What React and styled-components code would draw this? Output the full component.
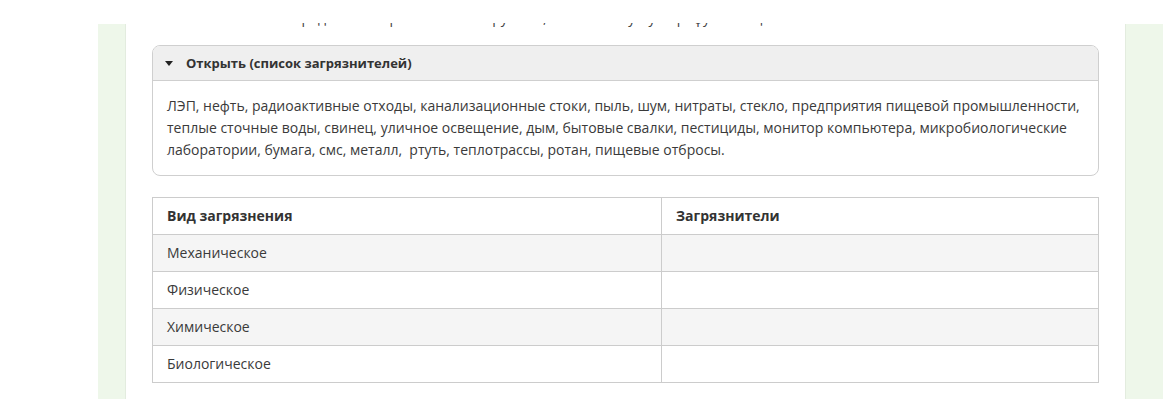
import React from "react";
import styled, { createGlobalStyle } from "styled-components";

const GlobalStyle = createGlobalStyle`
  html, body {
    margin: 0;
    padding: 0;
    background: #ffffff;
  }
  body {
    font-family: "Open Sans", "Noto Sans", sans-serif;
    color: #333333;
  }
`;

const Page = styled.div`
  display: flex;
  padding-left: 98px;
  min-height: 399px;
  box-sizing: border-box;
`;

const Rail = styled.div`
  width: ${(p) => p.$width}px;
  flex: none;
  margin-top: 24px;
  background: #eef7ea;
  box-sizing: border-box;
  ${(p) => (p.$side === "left" ? "border-right" : "border-left")}: 1px solid #e3ecdf;
`;

const Main = styled.main`
  flex: 1;
  min-width: 0;
  padding: 0 26px;
  box-sizing: border-box;
`;

/* the tail of the paragraph scrolled above the viewport */
const ScrolledLine = styled.div`
  height: 6px;
  margin-top: 23px;
  overflow: hidden;
`;

const ScrolledText = styled.p`
  margin: -16px 0 0 118px;
  font-size: 14px;
  line-height: 22px;
  white-space: nowrap;
  color: #444;
`;

const Accordion = styled.section`
  margin-top: 16px;
  border: 1px solid #cfcfcf;
  border-radius: 8px;
  overflow: hidden;
`;

const AccordionHeader = styled.button`
  display: flex;
  align-items: center;
  gap: 13px;
  width: 100%;
  height: 35px;
  padding: 0 0 1px 12px;
  background: #efefef;
  border: none;
  border-bottom: 1px solid #cfcfcf;
  font-family: inherit;
  font-size: 13px;
  font-weight: 700;
  color: #333;
  text-align: left;
  cursor: pointer;
  box-sizing: border-box;
`;

const Caret = styled.span`
  width: 0;
  height: 0;
  border-left: 4px solid transparent;
  border-right: 4px solid transparent;
  border-top: 5px solid #222;
  margin-top: 1px;
`;

const AccordionBody = styled.div`
  padding: 14px 14px 14px 14px;
  font-size: 14px;
  line-height: 22px;
  color: #3a3a3a;
`;

const Table = styled.table`
  margin-top: 21px;
  width: 100%;
  border-collapse: collapse;
  font-size: 14px;
  line-height: 22px;
  color: #3a3a3a;
`;

const Row = styled.tr`
  background: ${(p) => (p.$striped ? "#f5f5f5" : "#ffffff")};
`;

const HeadCell = styled.th`
  border: 1px solid #cccccc;
  padding: 7px 14px;
  text-align: left;
  font-weight: 700;
  color: #333;
  width: ${(p) => p.$width || "auto"};
`;

const Cell = styled.td`
  border: 1px solid #cccccc;
  padding: 7px 14px;
  height: 22px;
`;

const kinds = ["Механическое", "Физическое", "Химическое", "Биологическое"];

export default function App() {
  return (
    <>
      <GlobalStyle />
      <Page>
        <Rail $width={28} $side="left" />
        <Main>
          <ScrolledLine aria-hidden="true">
            <ScrolledText>
              Распределите загрязнители по группам, заполнив пустую графу таблицы.
            </ScrolledText>
          </ScrolledLine>
          <Accordion>
            <AccordionHeader type="button">
              <Caret />
              Открыть (список загрязнителей)
            </AccordionHeader>
            <AccordionBody>
              ЛЭП, нефть, радиоактивные отходы, канализационные стоки, пыль, шум, нитраты, стекло,
              предприятия пищевой промышленности, теплые сточные воды, свинец, уличное освещение,
              дым, бытовые свалки, пестициды, монитор компьютера, микробиологические лаборатории,
              бумага, смс, металл,&nbsp; ртуть, теплотрассы, ротан, пищевые отбросы.
            </AccordionBody>
          </Accordion>
          <Table>
            <thead>
              <Row>
                <HeadCell $width="480px">Вид загрязнения</HeadCell>
                <HeadCell>Загрязнители</HeadCell>
              </Row>
            </thead>
            <tbody>
              {kinds.map((kind, i) => (
                <Row key={kind} $striped={i % 2 === 0}>
                  <Cell>{kind}</Cell>
                  <Cell />
                </Row>
              ))}
            </tbody>
          </Table>
        </Main>
        <Rail $width={38} $side="right" />
      </Page>
    </>
  );
}
